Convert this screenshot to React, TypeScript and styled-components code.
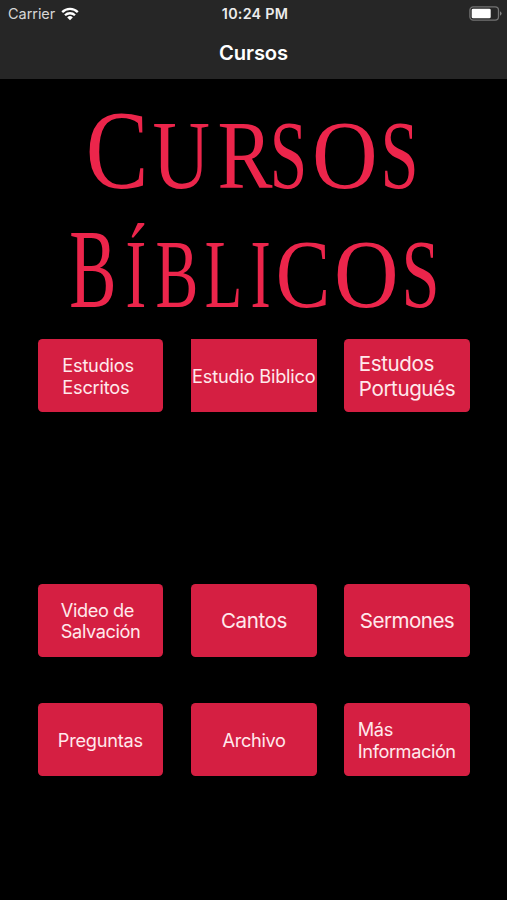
import React from "react";
import styled, { createGlobalStyle } from "styled-components";

const GlobalStyle = createGlobalStyle`
  html, body { margin: 0; padding: 0; background: #000; }
  * { box-sizing: border-box; }
`;

const Screen = styled.div`
  width: 507px;
  height: 900px;
  overflow: hidden;
  display: flex;
  flex-direction: column;
  background: #000;
  font-family: Inter, "Liberation Sans", sans-serif;
`;

const Header = styled.header`
  flex: none;
  height: 79px;
  background: #262626;
`;

const StatusBar = styled.div`
  display: grid;
  grid-template-columns: 1fr auto 1fr;
  align-items: center;
  height: 27px;
  padding: 0 5px 0 8px;
`;

const Carrier = styled.div`
  display: flex;
  align-items: center;
  gap: 6px;
  color: #d6d6d6;
  font-size: 14.5px;
  letter-spacing: -0.05px;
`;

const Clock = styled.div`
  color: #ececec;
  font-size: 14.3px;
  font-weight: 600;
  letter-spacing: 0.25px;
`;

const BatterySlot = styled.div`
  display: flex;
  justify-content: flex-end;
`;

const NavTitle = styled.h1`
  margin: 0;
  height: 51px;
  line-height: 51px;
  text-align: center;
  color: #fff;
  font-size: 20.2px;
  font-weight: 600;
  letter-spacing: -0.15px;
`;

const Wordmark = styled.svg`
  flex: none;
  display: block;
  width: 507px;
  height: 260px;
  fill: #ec254b;
  font-family: "Liberation Serif", serif;
`;

const ButtonRow = styled.div<{ $gap: number }>`
  flex: none;
  display: grid;
  grid-template-columns: repeat(3, 125.7px);
  column-gap: 27.6px;
  height: 73px;
  margin: ${(p) => p.$gap}px 0 0 37.8px;
`;

const CourseButton = styled.button<{ $square?: boolean }>`
  display: flex;
  align-items: center;
  justify-content: flex-start;
  padding: 2px 0 0;
  border: 0;
  border-radius: ${(p) => (p.$square ? 0 : 4.5)}px;
  background: #d51f42;
  color: #ffe9ec;
  font-family: inherit;
`;

const Label = styled.span<{ $large?: boolean; $indent: number; $spacing: number }>`
  margin-left: ${(p) => p.$indent}px;
  text-align: left;
  white-space: pre;
  font-size: ${(p) => (p.$large ? 20.6 : 18.2)}px;
  line-height: ${(p) => (p.$large ? 24.5 : 21.8)}px;
  letter-spacing: ${(p) => p.$spacing}px;
`;

// Left bearing, right ink edge and advance of each capital, in em.
const METRICS: Record<string, [number, number, number]> = {
  C: [0.028, 0.645, 0.667],
  U: [0.014, 0.705, 0.722],
  R: [0.017, 0.659, 0.667],
  S: [0.05, 0.51, 0.556],
  O: [0.034, 0.688, 0.722],
  B: [0.017, 0.625, 0.667],
  I: [0.018, 0.315, 0.333],
  Í: [0.018, 0.315, 0.333],
  L: [0.012, 0.598, 0.611],
};

type Glyph = [char: string, left: number, right: number];

const CURSOS: Glyph[] = [
  ["C", 88.5, 146.5], ["U", 153.5, 208.5], ["R", 219, 272],
  ["S", 273, 304], ["O", 315, 374.5], ["S", 384, 415.5],
];
const BIBLICOS: Glyph[] = [
  ["B", 70.5, 113.5], ["Í", 126.5, 145], ["B", 156.5, 195.5], ["L", 205.5, 241.5],
  ["I", 251.5, 269.5], ["C", 278, 328.5], ["O", 337, 395.5], ["S", 405, 436.5],
];

function Word({ glyphs, y }: { glyphs: Glyph[]; y: number }) {
  return (
    <text y={y}>
      {glyphs.map(([char, left, right], i) => {
        const [lsb, edge, advance] = METRICS[char];
        const em = (right - left) / (edge - lsb);
        return (
          <tspan
            key={i}
            x={left - lsb * em}
            fontSize={i === 0 ? 113 : 97}
            textLength={advance * em}
            lengthAdjust="spacingAndGlyphs"
          >
            {char}
          </tspan>
        );
      })}
    </text>
  );
}

const WifiIcon = () => (
  <svg width="18" height="14" viewBox="0 0 18 14" fill="none" stroke="#fff" strokeWidth="2.3">
    <path d="M1.2 5.1a11 11 0 0 1 15.6 0" />
    <path d="M4 8.3a7.1 7.1 0 0 1 10 0" />
    <path d="M9 13.2 6.2 10.4a4 4 0 0 1 5.6 0Z" fill="#fff" stroke="none" />
  </svg>
);

const BatteryIcon = () => (
  <svg width="33" height="15" viewBox="0 0 33 15">
    <rect x="0.9" y="0.9" width="28.6" height="13.2" rx="3.4" fill="none" stroke="#737373" strokeWidth="1.3" />
    <rect x="2.7" y="2.7" width="19" height="9.6" rx="1.4" fill="#fff" />
    <path d="M31 5.2q1.6.7 1.6 2.3T31 9.8Z" fill="#808080" />
  </svg>
);

interface Course {
  text: string;
  indent: number;
  spacing: number;
  large?: boolean;
  square?: boolean;
}

const ROWS: { gap: number; items: Course[] }[] = [
  {
    gap: 0.3,
    items: [
      { text: "Estudios\nEscritos", indent: 24.5, spacing: -0.22 },
      { text: "Estudio Biblico", indent: 1, spacing: -0.2, square: true },
      { text: "Estudos\nPortugués", indent: 14.5, spacing: -0.42, large: true },
    ],
  },
  {
    gap: 171.5,
    items: [
      { text: "Video de\nSalvación", indent: 23, spacing: -0.4 },
      { text: "Cantos", indent: 29.8, spacing: -0.4, large: true },
      { text: "Sermones", indent: 15.5, spacing: -0.55, large: true },
    ],
  },
  {
    gap: 46.5,
    items: [
      { text: "Preguntas", indent: 20, spacing: -0.25 },
      { text: "Archivo", indent: 31.5, spacing: -0.35 },
      { text: "Más\nInformación", indent: 13.5, spacing: -0.42 },
    ],
  },
];

export default function App() {
  return (
    <Screen>
      <GlobalStyle />
      <Header>
        <StatusBar>
          <Carrier>
            <span>Carrier</span>
            <WifiIcon />
          </Carrier>
          <Clock>10:24 PM</Clock>
          <BatterySlot>
            <BatteryIcon />
          </BatterySlot>
        </StatusBar>
        <NavTitle>Cursos</NavTitle>
      </Header>
      <Wordmark viewBox="0 79 507 260" role="img" aria-label="Cursos Bíblicos">
        <Word glyphs={CURSOS} y={187.8} />
        <Word glyphs={BIBLICOS} y={306.6} />
      </Wordmark>
      {ROWS.map((row, i) => (
        <ButtonRow key={i} $gap={row.gap}>
          {row.items.map((c) => (
            <CourseButton key={c.text} $square={c.square}>
              <Label $large={c.large} $indent={c.indent} $spacing={c.spacing}>
                {c.text}
              </Label>
            </CourseButton>
          ))}
        </ButtonRow>
      ))}
    </Screen>
  );
}
